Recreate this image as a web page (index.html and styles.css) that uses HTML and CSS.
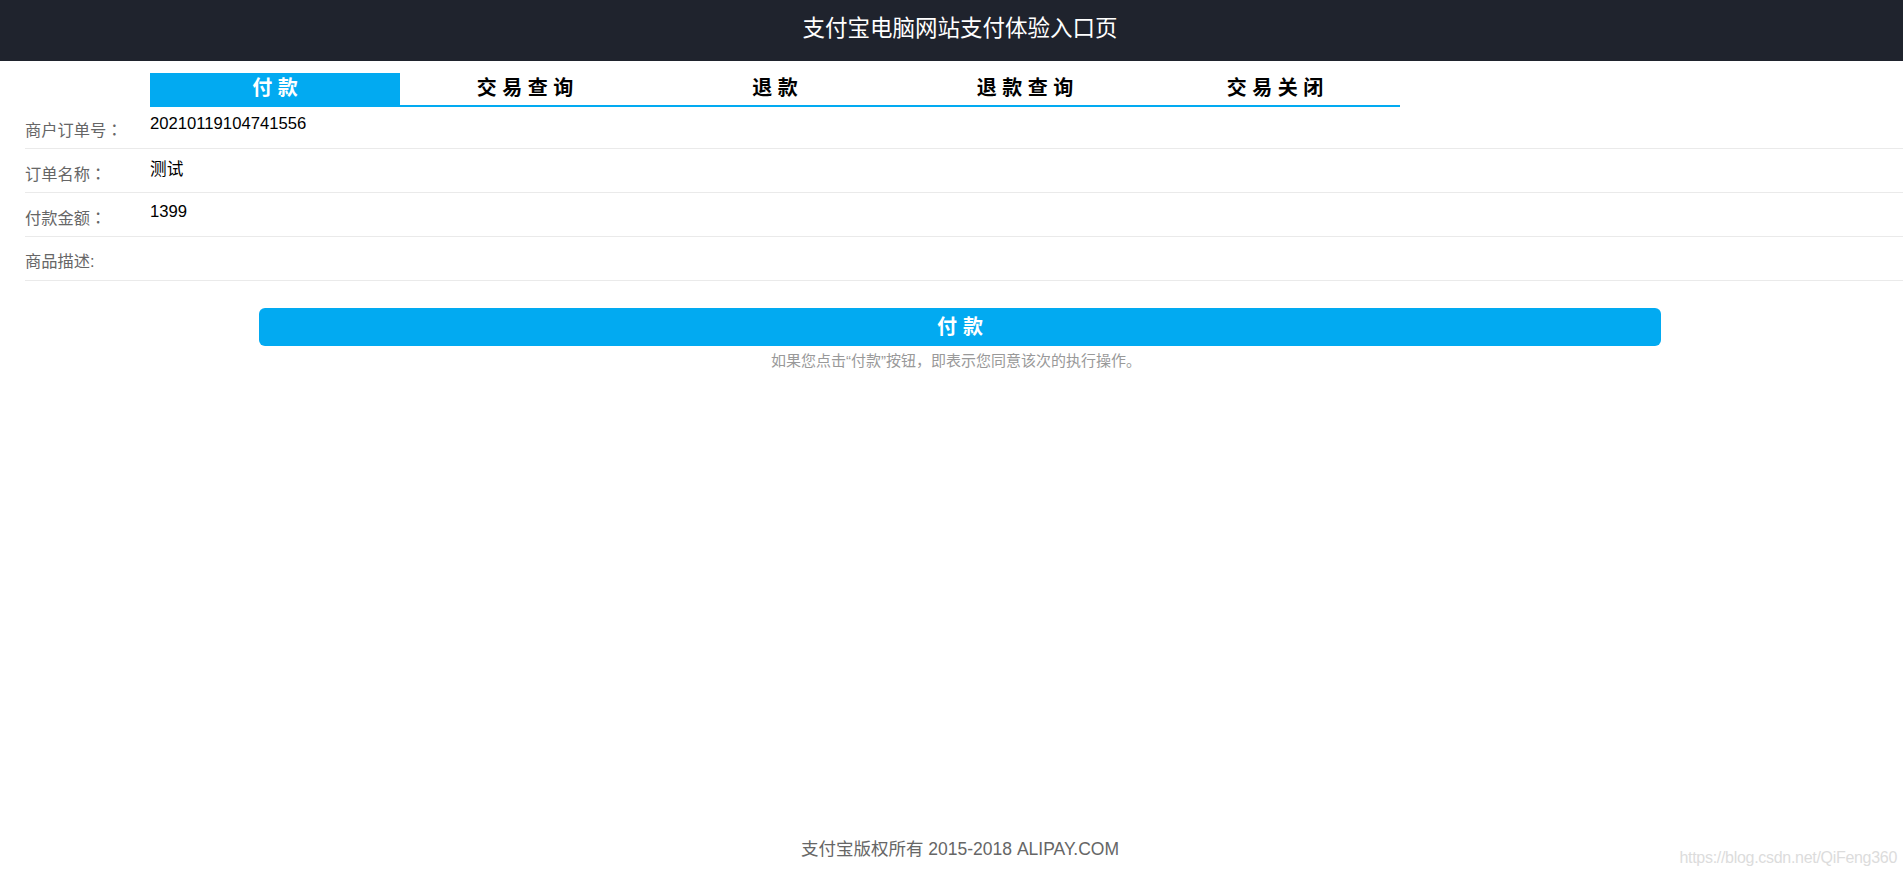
FILE: index.html
```html
<!DOCTYPE html>
<html lang="zh-CN">
<head>
<meta charset="utf-8">
<title>支付宝电脑网站支付体验入口页</title>
<link rel="stylesheet" href="styles.css">
</head>
<body>
<header class="am-header">
  <h1 class="am-title">支付宝电脑网站支付体验入口页</h1>
</header>
<main class="main">
  <nav class="tab-head">
    <div class="tab selected">付款</div>
    <div class="tab">交易查询</div>
    <div class="tab">退款</div>
    <div class="tab">退款查询</div>
    <div class="tab">交易关闭</div>
  </nav>
  <section class="form">
    <div class="row">
      <div class="label">商户订单号<span class="colon" lang="ja">：</span></div>
      <div class="value">20210119104741556</div>
    </div>
    <div class="row">
      <div class="label">订单名称<span class="colon" lang="ja">：</span></div>
      <div class="value cjk">测试</div>
    </div>
    <div class="row">
      <div class="label">付款金额<span class="colon" lang="ja">：</span></div>
      <div class="value">1399</div>
    </div>
    <div class="row">
      <div class="label">商品描述:</div>
      <div class="value"></div>
    </div>
  </section>
  <div class="btn-area">
    <button class="btn-pay" type="button">付款</button>
    <span class="note-help">如果您点击“付款”按钮，即表示您同意该次的执行操作。</span>
  </div>
</main>
<footer class="foot">支付宝版权所有 2015-2018 ALIPAY.COM</footer>
<div class="watermark">https://blog.csdn.net/QiFeng360</div>
</body>
</html>
```
FILE: styles.css
```css
* { margin: 0; padding: 0; box-sizing: border-box; }
html, body { height: 100%; }
body {
  font-family: "Liberation Sans", "Noto Sans CJK SC", Arial, sans-serif;
  background: #fff;
  display: flex;
  flex-direction: column;
  min-height: 100vh;
  position: relative;
  overflow: hidden;
}
.am-header {
  height: 61px;
  background: #1f232d;
  display: flex;
  align-items: center;
  justify-content: center;
  padding-left: 17px;
}
.am-title {
  font-size: 22.5px;
  font-weight: normal;
  color: #fff;
  line-height: 28px;
  margin-top: -4px;
}
.main { flex: 0 0 auto; }
.tab-head {
  display: flex;
  margin: 12px 0 0 150px;
  width: 1250px;
}
.tab {
  width: 250px;
  height: 34px;
  border-bottom: 2px solid #02aaf1;
  text-align: center;
  font-size: 20px;
  font-weight: bold;
  letter-spacing: 5.5px;
  padding-left: 5.5px;
  line-height: 30px;
  color: #000;
}
.tab.selected { background: #02aaf1; color: #fff; }
.form { margin-top: -2px; }
.row {
  display: flex;
  align-items: flex-start;
  margin-left: 25px;
  height: 44px;
  border-bottom: 1px solid #eaeaea;
}
.label {
  width: 125px;
  flex: 0 0 125px;
  color: #666;
  font-size: 16.25px;
  line-height: 20px;
  padding-top: 14px;
}
.colon {
  font-family: "Noto Sans CJK JP", "Noto Sans CJK SC", sans-serif;
}
.value {
  color: #000;
  font-size: 16.67px;
  line-height: 20px;
  padding-top: 9px;
}
.value.cjk { padding-top: 11px; }
.btn-area {
  margin: 27px 0 0 259px;
  width: 1402px;
  text-align: center;
}
.btn-pay {
  display: block;
  width: 1402px;
  height: 38px;
  border: none;
  border-radius: 6px;
  background: #02aaf1;
  color: #fff;
  font-family: "Liberation Sans", "Noto Sans CJK SC", Arial, sans-serif;
  font-size: 20px;
  font-weight: bold;
  letter-spacing: 6px;
  padding-left: 6px;
  line-height: 38px;
}
.note-help {
  display: block;
  color: #999;
  font-size: 15px;
  line-height: 19.5px;
  margin-top: 5px;
  padding-right: 8px;
}
.foot {
  margin-top: auto;
  text-align: center;
  color: #666;
  font-size: 17.5px;
  line-height: 21px;
  padding: 0 0 15px 17px;
}
.watermark {
  position: absolute;
  right: 6px;
  bottom: 8px;
  font-size: 16px;
  color: #dcdcdc;
  letter-spacing: -0.3px;
}
```
